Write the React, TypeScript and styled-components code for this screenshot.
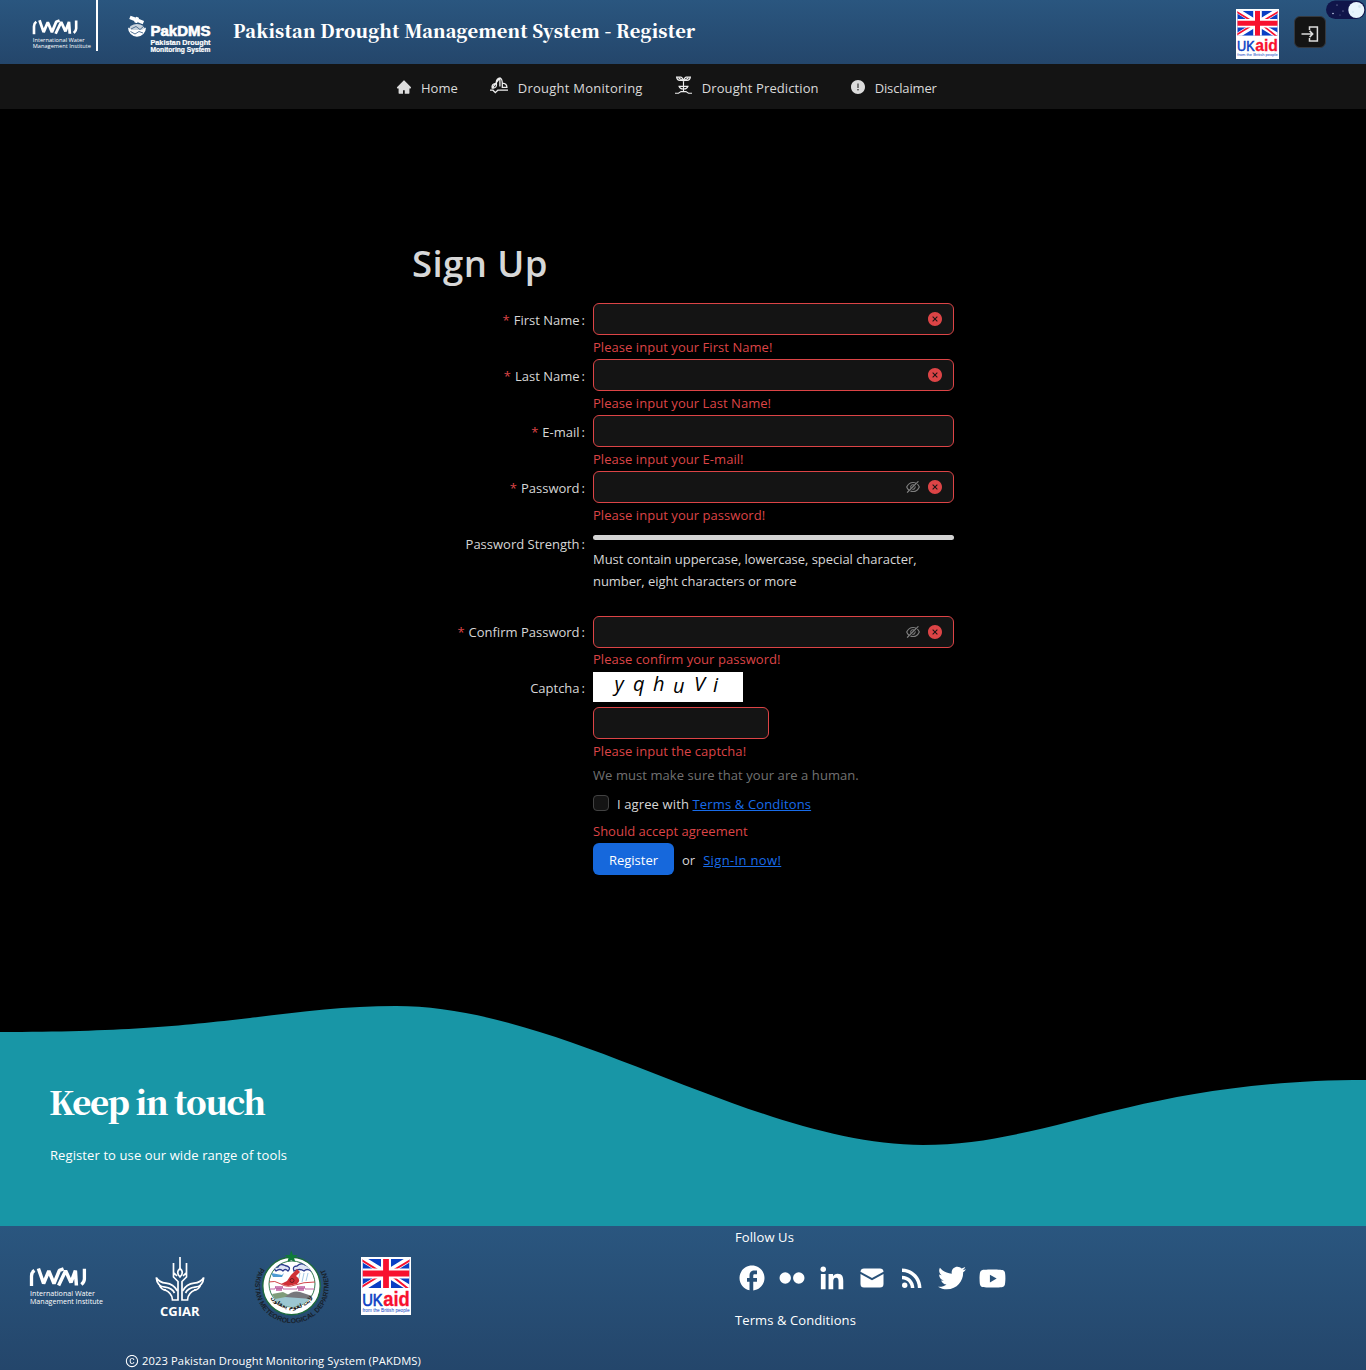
import React from 'react';
import styled, { createGlobalStyle } from 'styled-components';
import {
  AiFillHome,
  AiFillCloseCircle,
  AiOutlineEyeInvisible,
  AiFillExclamationCircle,
  AiOutlineCopyright,
} from 'react-icons/ai';
import { MdFacebook, MdRssFeed } from 'react-icons/md';
import { BiLogoFlickr, BiLogoLinkedin, BiLogoYoutube } from 'react-icons/bi';
import { FaTwitter } from 'react-icons/fa';

const sans = '"Open Sans", "Noto Sans", sans-serif';
const serif = '"Noto Serif CJK SC", "Noto Serif", "Liberation Serif", serif';
const textColor = 'rgba(255, 255, 255, 0.85)';
const danger = '#dc4446';
const surface = '#141414';
const brandGradient = 'linear-gradient(180deg, #2a567f 0%, #24466b 100%)';

const GlobalStyle = createGlobalStyle`
  * { box-sizing: border-box; }
  body {
    margin: 0;
    background: #000;
    color: ${textColor};
    font: 13px/22px ${sans};
  }
  svg { display: block; flex: none; overflow: visible; }
`;

const Page = styled.div`
  position: relative;
  display: flex;
  flex-direction: column;
  height: 1370px;
  overflow: hidden;
`;

const Text = styled.span<{ $track?: number }>`
  letter-spacing: ${(p) => p.$track ?? 0}px;
  white-space: nowrap;
`;

/* Header */
const Header = styled.header`
  display: flex;
  align-items: flex-start;
  height: 64px;
  padding: 0 40px 0 32px;
  background: ${brandGradient};
`;
const InstituteLink = styled.div`
  height: 51px;
  width: 66px;
  padding-top: 19px;
  border-right: 2px solid #fff;
`;
const ProductLogo = styled.div`
  padding: 16px 0 0 29px;
`;
const PageTitle = styled.h2`
  margin: 16px 0 0 21px;
  font: 900 18px/28px ${serif};
  letter-spacing: 0.17px;
  color: #fff;
  white-space: nowrap;
`;
const HeaderActions = styled.div`
  display: flex;
  gap: 15px;
  margin-left: auto;
  padding-top: 9px;
`;
const LoginButton = styled.button`
  display: grid;
  place-items: center;
  width: 32px;
  height: 32px;
  margin-top: 7px;
  padding: 3px 0 0;
  color: ${textColor};
  background: ${surface};
  border: 1px solid #35393f;
  border-radius: 6px;
`;
const ThemeToggle = styled.div`
  position: absolute;
  top: 0;
  right: 0;
`;

/* Navigation */
const Nav = styled.nav`
  display: flex;
  height: 45px;
  padding-left: 381px;
  background: ${surface};
`;
const NavItem = styled.a`
  display: flex;
  align-items: center;
  gap: 10px;
  padding: 2px 16px 0;
`;
const NavIcon = styled.span<{ $lift?: number; $bleed?: number }>`
  display: flex;
  padding-bottom: ${(p) => p.$lift ?? 2}px;
  margin: 0 ${(p) => -(p.$bleed ?? 0)}px;
`;

/* Form */
const Main = styled.main`
  flex: 1;
  padding: 131px 0 0 412px;
`;
const Heading = styled.h1`
  margin: 0 0 17px;
  font: 600 36.5px/46px ${sans};
  letter-spacing: 0.4px;
`;
const Form = styled.form`
  width: 542px;
`;
const Field = styled.div<{ $gap?: number }>`
  display: grid;
  grid-template-columns: 181px 361px;
  margin-bottom: ${(p) => p.$gap ?? 0}px;
`;
const Label = styled.label`
  display: flex;
  justify-content: flex-end;
  align-items: center;
  height: 33.2px;
  padding-right: 8px;
`;
const Required = styled.span`
  margin-right: 4px;
  color: ${danger};
`;
const Colon = styled.span`
  margin-left: 2px;
`;
const Control = styled.div`
  grid-column: 2;
`;
const InputBox = styled.div<{ $width?: number }>`
  display: flex;
  align-items: center;
  justify-content: flex-end;
  gap: 6px;
  width: ${(p) => p.$width ?? 361}px;
  height: 32px;
  padding: 0 10px;
  background: ${surface};
  border: 1px solid ${danger};
  border-radius: 6px;
`;
const Input = styled.input`
  flex: 1;
  min-width: 0;
  border: 0;
  outline: 0;
  background: transparent;
  color: inherit;
`;
const ErrorIcon = styled(AiFillCloseCircle)`
  color: ${danger};
`;
const EyeIcon = styled(AiOutlineEyeInvisible)`
  color: rgba(255, 255, 255, 0.45);
`;
const ErrorText = styled.div<{ $track?: number }>`
  height: 24.2px;
  margin-top: -0.2px;
  line-height: 24px;
  color: ${danger};
  letter-spacing: ${(p) => p.$track ?? 0.05}px;
`;
const HelpText = styled(ErrorText)`
  color: rgba(255, 255, 255, 0.45);
`;
const StrengthBar = styled.div`
  height: 5px;
  margin: 8px 0;
  border-radius: 3px;
  background: #d3d3d3;
`;
const StrengthHint = styled.div`
  line-height: 22px;
  letter-spacing: -0.04px;
  white-space: pre-line;
`;
const Captcha = styled.div`
  height: 35.4px;
`;
const Agreement = styled.div`
  display: flex;
  align-items: center;
  height: 32px;
`;
const AgreementText = styled(Text)`
  padding-top: 2px;
`;
const CheckBox = styled.span`
  width: 16px;
  height: 16px;
  margin-right: 8px;
  background: ${surface};
  border: 1px solid #424242;
  border-radius: 4px;
`;
const Link = styled.a<{ $track?: number }>`
  color: #186cea;
  text-decoration: underline;
  letter-spacing: ${(p) => p.$track ?? 0.15}px;
`;
const SubmitRow = styled.div`
  display: flex;
  align-items: center;
  gap: 8px;
`;
const SubmitText = styled.span`
  padding-top: 2px;
`;
const SubmitButton = styled.button`
  width: 81px;
  height: 32px;
  padding: 2px 0 0;
  border: 0;
  border-radius: 6px;
  background: #1668dc;
  color: #fff;
  font: 13px ${sans};
`;

/* Wave banner */
const Banner = styled.section`
  position: relative;
  height: 304px;
  padding: 156px 0 0 49px;
  color: #fff;
`;
const Wave = styled.svg`
  position: absolute;
  left: 0;
  bottom: 0;
  z-index: -1;
`;
const BannerTitle = styled.h2`
  margin: 0;
  font: 900 32.5px/46px ${serif};
  letter-spacing: -1.25px;
`;
const BannerText = styled.p`
  margin: 20px 0 0 1px;
  letter-spacing: 0.1px;
`;

/* Footer */
const Footer = styled.footer`
  display: grid;
  grid-template-columns: 735px 1fr;
  height: 144px;
  color: #fff;
  background: ${brandGradient};
`;
const Partners = styled.div`
  display: flex;
  align-items: flex-start;
  height: 124px;
  padding: 25px 0 0 29px;
`;
const PartnerLogo = styled.div<{ $top?: number; $left?: number }>`
  margin: ${(p) => p.$top ?? 0}px 0 0 ${(p) => p.$left ?? 0}px;
`;
const Copyright = styled.div`
  display: flex;
  align-items: center;
  gap: 3px;
  height: 22px;
  padding-left: 125px;
  font-size: 11.2px;
`;
const SocialRow = styled.div`
  display: grid;
  grid-template-columns: repeat(7, 34px);
  column-gap: 6px;
  place-items: center;
  height: 60px;
  margin-bottom: 1px;
`;

const Iwmi = ({ width }: { width: number }) => (
  <svg width={width} height={(width * 40) / 74} viewBox="0 0 74 40" fill="none" stroke="#fff" strokeWidth="3.3">
    <path d="M2.5 19V9Q2.5 5.4 5.4 3.4" />
    <path d="M9.4 1.5 14.6 16.5 19.8 4 25 16.5 30.4 3.4 34.6 1.8" strokeLinejoin="bevel" strokeWidth="3.5" />
    <path d="M29.6 18.5 36.6 3.8 42 15.5 46.4 3.6 47.4 18.5" strokeLinejoin="bevel" strokeWidth="3.5" />
    <path d="M55.4 1.8V12Q55.4 15 52.4 17.5" />
    <g fill="#fff" stroke="none" fontFamily={sans} fontSize="7.6">
      <text x="1" y="28.8" textLength="65" lengthAdjust="spacingAndGlyphs">International Water</text>
      <text x="1" y="37" textLength="73" lengthAdjust="spacingAndGlyphs">Management Institute</text>
    </g>
  </svg>
);

const PakDms = () => (
  <svg width="85" height="38" viewBox="0 0 85 38" fill="#fff">
    <g transform="rotate(21 9 5)">
      <rect x="2" y="2" width="6" height="3.6" />
      <rect x="10.5" y="2" width="6" height="3.6" />
      <rect x="7.5" y=".8" width="3.4" height="6" rx="1" />
    </g>
    <path d="M1 11.5A9 9.2 0 0 0 19 11.5L15 14H5Z" />
    <path d="M3.5 10Q10 6 16.5 10L18 13Q14 16 10 16T2 13Z" opacity=".75" />
    <path d="M4 13 9 10.5 13 13.5 17 10M3.5 15.5 8 18 12 15.5 16 17" stroke="#2a507a" strokeWidth=".8" fill="none" />
    <g fontFamily='"Liberation Sans", Arial, sans-serif' fontWeight="700" stroke="#fff">
      <text x="23.5" y="19.7" fontSize="14" strokeWidth=".6" textLength="60" lengthAdjust="spacingAndGlyphs">PakDMS</text>
      <text x="23.5" y="28.5" fontSize="6.6" strokeWidth=".2" textLength="60" lengthAdjust="spacingAndGlyphs">Pakistan Drought</text>
      <text x="23.5" y="35.5" fontSize="6.6" strokeWidth=".2" textLength="60" lengthAdjust="spacingAndGlyphs">Monitoring System</text>
    </g>
  </svg>
);

const UkAid = ({ width, height }: { width: number; height: number }) => (
  <svg width={width} height={height} viewBox="0 0 50 58" preserveAspectRatio="none">
    <path fill="#fff" d="M0 0H50V58H0Z" />
    <clipPath id="flag"><path d="M0 0H47V29H0Z" /></clipPath>
    <g transform="translate(1.5 2)">
      <g clipPath="url(#flag)">
        <path fill="#0b3fc4" d="M0 0H47V29H0Z" />
        <path stroke="#fff" strokeWidth="6" d="M0 0 47 29M47 0 0 29" />
        <path stroke="#f8112f" strokeWidth="2" d="M-1 1 20 14M27 15 46 30M48 1 28 13M20 15-1 28" />
        <path stroke="#fff" strokeWidth="10" d="M23.5 0V29M0 14.5H47" />
        <path stroke="#f8112f" strokeWidth="5.8" d="M23.5 0V29M0 14.5H47" />
      </g>
    </g>
    <g fontFamily='"Liberation Sans", Arial, sans-serif'>
      <text x="1.2" y="48.7" fontSize="16" fill="#0b3fc4" stroke="#0b3fc4" strokeWidth=".6" textLength="20.5" lengthAdjust="spacingAndGlyphs">UK</text>
      <text x="22.3" y="48.7" fontSize="20" fontWeight="700" fill="#f8112f" stroke="#f8112f" strokeWidth=".3" textLength="26.5" lengthAdjust="spacingAndGlyphs">aid</text>
      <text x="1.5" y="55" fontSize="5" fill="#0b3fc4" textLength="47" lengthAdjust="spacingAndGlyphs">from the British people</text>
    </g>
  </svg>
);

const Cgiar = () => (
  <svg width="50" height="62" viewBox="0 0 50 62" fill="none" stroke="#fff" strokeWidth="1.7">
    <path d="M25 0V12M18.5 6V15.5L22 19M31.5 6V15.5L28 19M18.5 15V20L23 24.5V43H17.5Q17.5 36 9 32.5M31.5 15V20L27 24.5V43H32.5Q32.5 36 41 32.5" />
    <path d="M25 11.5Q20.5 15.5 25 20 29.5 15.5 25 11.5Z" />
    <path d="M1.2 20.5Q4 25.5 11 26.2 18.5 27 22.5 34M1.2 20.5Q2 29.5 10 30.2 17 31 19.5 36M4 27Q6 33 11 33.2M48.8 20.5Q46 25.5 39 26.2 31.5 27 27.5 34M48.8 20.5Q48 29.5 40 30.2 33 31 30.5 36M46 27Q44 33 39 33.2" />
    <text x="5" y="58.5" fill="#fff" stroke="none" fontFamily={sans} fontWeight="700" fontSize="13" textLength="39.5" lengthAdjust="spacingAndGlyphs">CGIAR</text>
  </svg>
);

const MetDepartment = () => (
  <svg width="76" height="76" viewBox="0 0 76 76">
    <defs>
      <path id="rim" d="M5.4 16.5A36.8 36.8 0 1 0 68.6 16.5" />
      <path id="verse" d="M14.5 45A25.8 25.8 0 0 0 59.5 45" />
      <clipPath id="disc"><circle cx="37" cy="33" r="23" /></clipPath>
    </defs>
    <circle cx="36.5" cy="35" r="28.7" fill="#fff" stroke="#1d6b3c" strokeWidth="1.4" />
    <path fill="#0f7a39" d="M36.3-.4 38 4.1H42.8L39.1 7.1 40.5 11.8 36.3 9 32.1 11.8 33.5 7.1 29.8 4.1H34.6Z" />
    <circle cx="37" cy="33" r="23" fill="#fff" stroke="#1d6b3c" strokeWidth=".9" />
    <g clipPath="url(#disc)" fill="none">
      <path fill="#9cc7d2" d="M14 46 26 43 60 47V60H14Z" />
      <path fill="#7f9c7a" d="M17 43 28 41 36 45 20 48Z" />
      <path fill="#77787d" d="M30 46Q38 39 45 41L57 45V48Z" />
      <path fill="#dfe4f5" stroke="#2c3a8c" strokeWidth="1.3" d="M21 20Q17 16 23 16 25 12 30 14.5 37 16 33 20 30 17 28 20 25 17 21 20ZM39 20Q37 15 42 15 46 11 50 14 58 15 56 20 52 17 49 20 45 17 39 20Z" />
      <path stroke="#8bbbe0" strokeWidth=".8" d="M45 22 43 31M49 22 47 31M53 22 51 30" />
      <path fill="#4d9bd3" d="M16 22 27 24 29 22 27 26 18 26Z" />
      <path fill="#cf2f36" d="M36 24 42 18 45 21 41 25Q47 29 42 33L33 35 26 33 32 30Z" />
      <circle cx="37" cy="29.5" r="2" stroke="#6d1b22" />
      <path stroke="#d0464b" d="M13 31Q20 29 26 33T40 34 60 31" />
      <path stroke="#b9559a" strokeWidth=".9" d="M15 38H20L21 35 22 40 23 35 24 40 25 35 26 40 27 35 28 38H42L43 35 44 40 45 35 46 40 47 35 48 40 49 35 50 38H60" />
    </g>
    <text fontFamily='"Liberation Sans", Arial, sans-serif' fontSize="7" fontWeight="700" fill="#18212b">
      <textPath href="#rim" textLength="153" lengthAdjust="spacingAndGlyphs">PAKISTAN METEOROLOGICAL DEPARTMENT</textPath>
    </text>
    <text fontFamily='"DejaVu Sans", sans-serif' fontSize="5.6" fontWeight="700" fill="#222" textAnchor="middle">
      <textPath href="#verse" startOffset="50%">لآيت لقوم يعقلون</textPath>
    </text>
  </svg>
);

const Toggle = () => (
  <svg width="40" height="20" viewBox="0 0 40 20">
    <rect y=".5" width="39.5" height="18.5" rx="9.25" fill="#10154a" />
    <circle cx="30.3" cy="10" r="8" fill="#e8f6fd" />
    <circle cx="33.5" cy="6.5" r="1.4" fill="#d3e8f1" />
    <circle cx="27" cy="12" r="1.1" fill="#d9edf5" />
    <g fill="#c9d3ee">
      <circle cx="11" cy="5" r=".5" /><circle cx="7" cy="13.5" r=".8" /><circle cx="17" cy="11" r=".5" /><circle cx="14" cy="15" r=".4" />
    </g>
  </svg>
);

const LoginIcon = () => (
  <svg width="18" height="18" viewBox="0 0 18 18" fill="none" stroke="currentColor" strokeWidth="1.5">
    <path d="M8.5 5V2H16.4V16H8.5V13M.5 9H11.5M8.6 5.9 11.7 9 8.6 12.1" />
  </svg>
);

const MonitoringIcon = () => (
  <svg width="18" height="17" viewBox="0 0 18 17" fill="none" stroke="#ededed" strokeWidth="1.3">
    <path d="M2.2 11Q1.2 6.6 6.4 6.4 7.2 10.8 3.4 11ZM2.8 10.4 9 2M6.2 5.5Q6.6 1.2 10.2 1 12.2 1.8 12.3 6.4M9.9 1.4V9.6M12.3 10.3V6.2Q16.8 6.4 16.9 10.3ZM0 13.2H3L5.3 15.6 7.8 13.2H18" />
  </svg>
);

const PredictionIcon = () => (
  <svg width="17" height="18" viewBox="0 0 17 18" fill="none" stroke="#ededed" strokeWidth="1.15">
    <path d="M1.6 1.1H6Q7.6 1.6 8.5 4.5H5Q2 4 1.6 1.1ZM15.4 1.1H11Q9.4 1.6 8.5 4.5H12Q15 4 15.4 1.1ZM3.6 2 8.5 5 13.4 2M8.5 4.5V16M3.5 10.3H13.5M4 10.3Q5 13.2 8.5 13 12 13.2 13 10.3M0 17.2H3.5L6 15.6H11L13.5 17.2H17" />
  </svg>
);

const MailIcon = () => (
  <svg width="24" height="20" viewBox="0 0 24 20" fill="#fff">
    <path d="M.5 3.8Q.8.5 4 .5H20Q23.2.5 23.5 3.8L12 10Z" />
    <path d="M.5 6 12 12.2 23.5 6V16Q23.5 19.5 20 19.5H4Q.5 19.5.5 16Z" />
  </svg>
);

const CaptchaImage = () => (
  <svg width="150" height="30" viewBox="0 0 150 30" fontFamily={sans} fontStyle="italic" fontSize="20" fill="#000">
    <rect width="150" height="30" fill="#fff" />
    <text x="21.5" y="18.7">y</text>
    <text x="40" y="18.7">q</text>
    <text x="60" y="18.7">h</text>
    <text x="80" y="20.7">u</text>
    <text x="101" y="18.7">V</text>
    <text x="120" y="20">i</text>
  </svg>
);

interface RowProps {
  label: string;
  error: string;
  eye?: boolean;
  status?: boolean;
}

const InputRow = ({ label, error, eye, status = true }: RowProps) => (
  <Field>
    <Label><Required>*</Required><Text>{label}</Text><Colon>:</Colon></Label>
    <Control>
      <InputBox>
        <Input type={eye ? 'password' : 'text'} />
        {eye && <EyeIcon size={16} />}
        {status && <ErrorIcon size={16} />}
      </InputBox>
      <ErrorText>{error}</ErrorText>
    </Control>
  </Field>
);

export default function App() {
  return (
    <Page>
      <GlobalStyle />
      <Header>
        <InstituteLink><Iwmi width={59} /></InstituteLink>
        <ProductLogo><PakDms /></ProductLogo>
        <PageTitle>Pakistan Drought Management System - Register</PageTitle>
        <HeaderActions>
          <UkAid width={43} height={50} />
          <LoginButton aria-label="Login"><LoginIcon /></LoginButton>
        </HeaderActions>
      </Header>
      <ThemeToggle><Toggle /></ThemeToggle>

      <Nav>
        <NavItem><NavIcon $bleed={1}><AiFillHome size={16} /></NavIcon><Text>Home</Text></NavItem>
        <NavItem><NavIcon $lift={5}><MonitoringIcon /></NavIcon><Text $track={0.25}>Drought Monitoring</Text></NavItem>
        <NavItem><NavIcon $lift={5}><PredictionIcon /></NavIcon><Text $track={0.1}>Drought Prediction</Text></NavItem>
        <NavItem><NavIcon $bleed={1}><AiFillExclamationCircle size={16} /></NavIcon><Text $track={-0.15}>Disclaimer</Text></NavItem>
      </Nav>

      <Main>
        <Heading>Sign Up</Heading>
        <Form>
          <InputRow label="First Name" error="Please input your First Name!" />
          <InputRow label="Last Name" error="Please input your Last Name!" />
          <InputRow label="E-mail" error="Please input your E-mail!" status={false} />
          <InputRow label="Password" error="Please input your password!" eye />
          <Field $gap={23.6}>
            <Label><Text>Password Strength</Text><Colon>:</Colon></Label>
            <Control>
              <StrengthBar />
              <StrengthHint>{'Must contain uppercase, lowercase, special character,\nnumber, eight characters or more'}</StrengthHint>
            </Control>
          </Field>
          <InputRow label="Confirm Password" error="Please confirm your password!" eye />
          <Field>
            <Label>Captcha<Colon>:</Colon></Label>
            <Control>
              <Captcha><CaptchaImage /></Captcha>
              <InputBox $width={176}><Input /></InputBox>
              <ErrorText>Please input the captcha!</ErrorText>
              <HelpText $track={0.07}>We must make sure that your are a human.</HelpText>
            </Control>
          </Field>
          <Field>
            <Control>
              <Agreement>
                <CheckBox />
                <AgreementText $track={0.12}>I agree with <Link>Terms &amp; Conditons</Link></AgreementText>
              </Agreement>
              <ErrorText $track={0}>Should accept agreement</ErrorText>
            </Control>
          </Field>
          <Field>
            <Control>
              <SubmitRow>
                <SubmitButton type="button">Register</SubmitButton>
                <SubmitText>or</SubmitText>
                <SubmitText><Link $track={0.35}>Sign-In now!</Link></SubmitText>
              </SubmitRow>
            </Control>
          </Field>
        </Form>
      </Main>

      <Banner>
        <Wave width="1366" height="304" viewBox="0 922 1366 304">
          <path fill="#1896a6" d="M0 1032C120 1032 180 1026 250 1018 300 1012 345 1006 396 1006 565 1006 755 1145 923 1145 1050 1145 1138 1080 1366 1080V1226H0Z" />
        </Wave>
        <BannerTitle>Keep in touch</BannerTitle>
        <BannerText>Register to use our wide range of tools</BannerText>
      </Banner>

      <Footer>
        <div>
          <Partners>
            <PartnerLogo $top={16}><Iwmi width={74} /></PartnerLogo>
            <PartnerLogo $top={6} $left={52}><Cgiar /></PartnerLogo>
            <PartnerLogo $left={50}><MetDepartment /></PartnerLogo>
            <PartnerLogo $top={6} $left={30}><UkAid width={50} height={58} /></PartnerLogo>
          </Partners>
          <Copyright><AiOutlineCopyright size={14} /><Text $track={0.1}>2023 Pakistan Drought Monitoring System (PAKDMS)</Text></Copyright>
        </div>
        <div>
          <Text $track={0.1}>Follow Us</Text>
          <SocialRow>
            <MdFacebook size={30} />
            <BiLogoFlickr size={30} />
            <BiLogoLinkedin size={30} />
            <MailIcon />
            <MdRssFeed size={30} />
            <FaTwitter size={28} />
            <BiLogoYoutube size={31} />
          </SocialRow>
          <Text $track={0.09}>Terms &amp; Conditions</Text>
        </div>
      </Footer>
    </Page>
  );
}
